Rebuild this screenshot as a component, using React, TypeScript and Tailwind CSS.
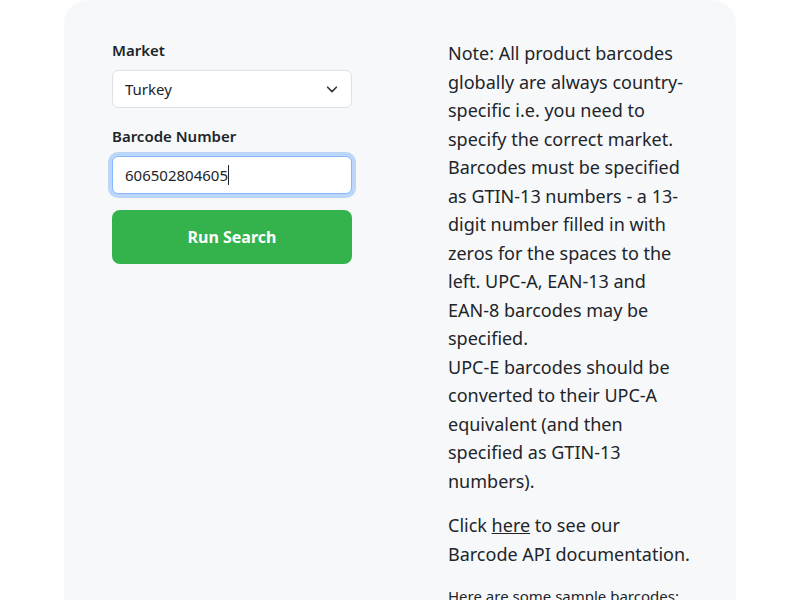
import React from "react";

export default function App() {
  return (
    <div className="min-h-[600px] w-full bg-white" style={{ fontFamily: '"Noto Sans", "Open Sans", sans-serif' }}>
      <div className="mx-16 rounded-t-[24px] bg-[#f7f8fa] px-12 pt-[38px] pb-10 min-h-[600px]">
        <div className="flex gap-24">
          <div className="w-[240px] shrink-0 flex flex-col">
            <label className="text-[15px] font-semibold text-[#212529] leading-6">Market</label>
            <div className="mt-2 h-[38px] rounded-md border border-[#dee2e6] bg-white flex items-center justify-between pl-3 pr-3">
              <span className="text-[15px] text-[#212529]">Turkey</span>
              <svg width="14" height="14" viewBox="0 0 16 16" fill="none" stroke="#343a40" strokeWidth="2" strokeLinecap="round" strokeLinejoin="round">
                <path d="M3 6l5 5 5-5" />
              </svg>
            </div>
            <label className="mt-[16px] text-[15px] font-semibold text-[#212529] leading-6">Barcode Number</label>
            <div className="mt-2 h-[38px] rounded-md border border-[#86b7fe] bg-white flex items-center pl-3 ring-4 ring-[#0d6efd]/25">
              <span className="text-[15px] text-[#212529]">606502804605</span>
              <span className="inline-block w-px h-[20px] bg-[#212529]" />
            </div>
            <button className="mt-[16px] h-[54px] rounded-lg bg-[#34b24c] text-white text-[16px] font-bold">
              Run Search
            </button>
          </div>
          <div className="w-[240px] shrink-0 text-[#212529]">
            <p className="text-[18px] leading-[28.5px] mt-[1px]">
              Note: All product barcodes globally are always country-specific i.e. you need to specify the correct market. Barcodes must be specified as GTIN-13 numbers - a 13-digit number filled in with zeros for the spaces to the left. UPC-A, EAN-13 and EAN-8 barcodes may be specified.
              <br />
              UPC-E barcodes should be converted to their UPC-A equivalent (and then specified as GTIN-13 numbers).
            </p>
            <p className="mt-4 text-[18px] leading-[28.5px] whitespace-nowrap">
              Click <a className="underline">here</a> to see our
              <br />
              Barcode API documentation.
            </p>
            <p className="mt-4 text-[15px] leading-6">Here are some sample barcodes:</p>
          </div>
        </div>
      </div>
    </div>
  );
}
